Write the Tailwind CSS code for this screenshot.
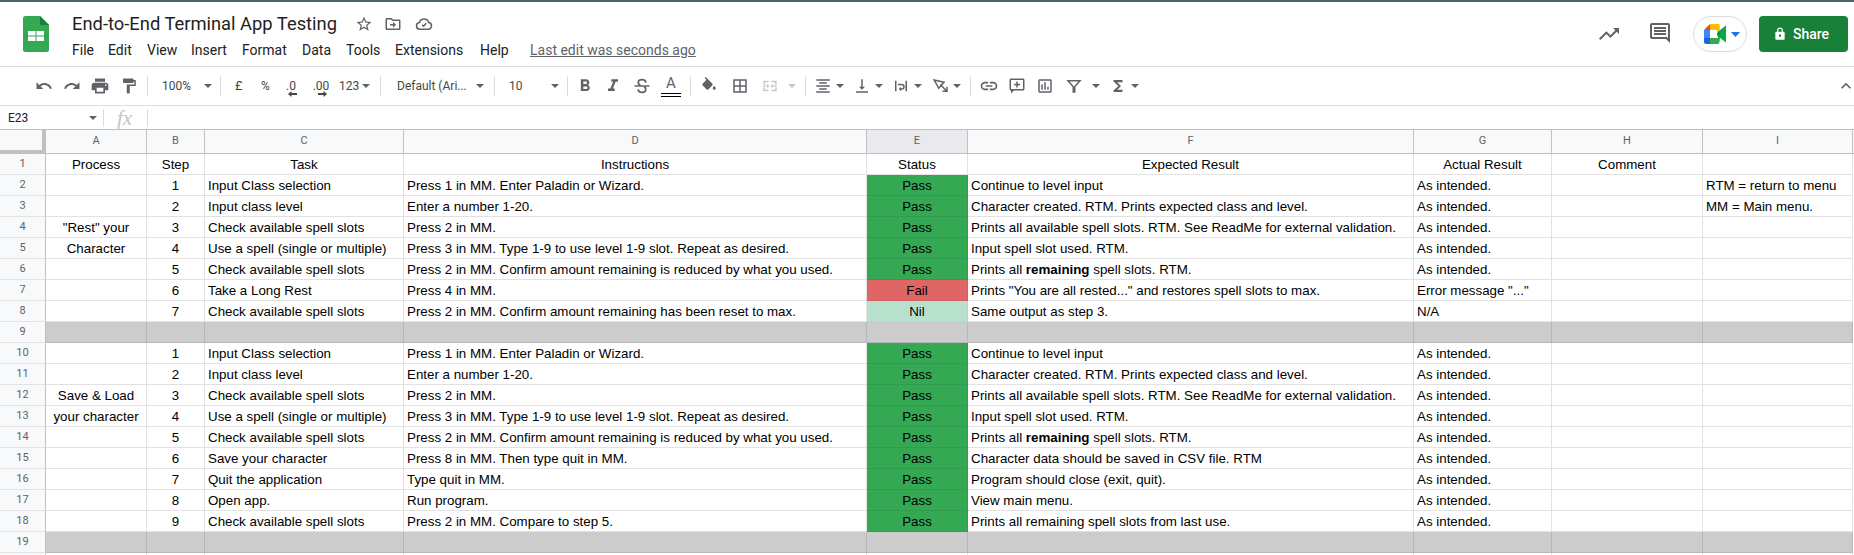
<!DOCTYPE html>
<html lang="en">
<head>
    <meta charset="UTF-8">
    <title>End-to-End Terminal App Testing</title>
    <script src="https://cdn.jsdelivr.net/npm/@tailwindcss/browser@4"></script>
</head>
<body class="bg-white h-[555px] overflow-hidden font-['Liberation_Sans',sans-serif] text-black">
    <div class="h-[2px] bg-[#4a6068]"></div>

    <!-- Title bar -->
    <header class="h-[65px] flex border-b border-[#dadce0] relative">
        <div class="w-[72px] pl-[23px] pt-[14px] shrink-0">
            <svg width="26" height="36" viewBox="0 0 26 36">
                <path d="M2.500 0H17l9 9v24.500a2.500 2.500 0 0 1-2.500 2.500h-21A2.500 2.500 0 0 1 0 33.500v-31A2.500 2.500 0 0 1 2.500 0z" fill="#34a853"/>
                <path d="M17 0l9 9h-9z" fill="#188038"/>
                <path d="M5 15h7.500v4.500H5zM13.500 15H21v4.500h-7.500zM5 20.500h7.500V25H5zM13.500 20.500H21V25h-7.500z" fill="#fff"/>
            </svg>
        </div>
        <div class="flex-1">
            <div class="flex items-center h-[32px] pt-[12px]">
                <span class="font-['Roboto',sans-serif] text-[18.35px] leading-[20px] text-[#1f1f1f]">End-to-End Terminal App Testing</span>
                <svg class="ml-[18px]" width="18" height="18" viewBox="0 0 24 24" fill="#5f6368"><path d="M22 9.240l-7.190-.62L12 2 9.190 8.630 2 9.240l5.460 4.730L5.820 21 12 17.270 18.180 21l-1.630-7.030L22 9.240zM12 15.400l-3.760 2.270 1-4.280-3.320-2.880 4.380-.38L12 6.100l1.710 4.040 4.380.38-3.320 2.880 1 4.280L12 15.400z"/></svg>
                <svg class="ml-[11px]" width="18" height="18" viewBox="0 0 24 24" fill="#5f6368"><path d="M20 6h-8l-2-2H4c-1.100 0-2 .9-2 2v12c0 1.100.9 2 2 2h16c1.100 0 2-.9 2-2V8c0-1.100-.9-2-2-2zm0 12H4V6h5.200l2 2H20v10zm-8-1l4-4-4-4v3H8v2h4v3z"/></svg>
                <svg class="ml-[13px]" width="18" height="18" viewBox="0 0 24 24" fill="none" stroke="#5f6368" stroke-width="2"><path d="M6.500 19a4.500 4.500 0 0 1-.6-8.960A6.500 6.500 0 0 1 18.400 10.100 4.500 4.500 0 0 1 17.500 19z"/><path d="M9.500 13l2 2 3.500-4"/></svg>
            </div>
            <nav class="flex items-center h-[20px] mt-[6px] font-['Roboto',sans-serif] text-[14px] leading-[20px] text-[#202124]">
                <span class="w-[36px]">File</span>
                <span class="w-[39px]">Edit</span>
                <span class="w-[44px]">View</span>
                <span class="w-[51px]">Insert</span>
                <span class="w-[60px]">Format</span>
                <span class="w-[44px]">Data</span>
                <span class="w-[49px]">Tools</span>
                <span class="w-[85px]">Extensions</span>
                <span class="w-[50px]">Help</span>
                <span class="underline text-[#5f6368]">Last edit was seconds ago</span>
            </nav>
        </div>
        <div class="flex items-start pt-[14px] pr-[6px]">
            <svg width="24" height="24" viewBox="0 0 24 24" fill="#5f6368" class="mt-[6px]"><path d="M16 6l2.290 2.290-4.880 4.880-4-4L2 16.590 3.410 18l6-6 4 4 6.300-6.290L22 12V6z"/></svg>
            <svg width="24" height="24" viewBox="0 0 24 24" fill="#5f6368" class="ml-[27px] mt-[5px]"><path d="M21.990 4c0-1.100-.89-2-1.990-2H4c-1.100 0-2 .9-2 2v12c0 1.100.9 2 2 2h14l4 4-.01-18zM20 4v13.170L18.830 16H4V4h16zM6 12h12v2H6zm0-3h12v2H6zm0-3h12v2H6z"/></svg>
            <div class="ml-[21px] w-[54px] h-[36px] border border-[#dadce0] rounded-full flex items-center pl-[10px]">
                <svg width="24" height="20" viewBox="0 0 24 20">
                    <path d="M6 0h9.500v6H6z" fill="#fbbc04"/>
                    <path d="M6 0v6H0z" fill="#ea4335"/>
                    <path d="M0 6h6v8H0z" fill="#4285f4"/>
                    <path d="M0 14h6v6H2a2 2 0 0 1-2-2z" fill="#1967d2"/>
                    <path d="M6 14h9.500v4a2 2 0 0 1-2 2H6z" fill="#34a853"/>
                    <path d="M13 0h.5a2 2 0 0 1 2 2v4.500L13 10z" fill="#fbbc04"/>
                    <path d="M15.500 6.500L22 1.500v17l-6.500-5V17.500L13 10z" fill="#00ac47"/>
                    <path d="M13 10l2.500-3.500v7z" fill="#188038"/>
                </svg>
                <svg class="ml-[3px]" width="9" height="5" viewBox="0 0 9 5" fill="#1a73e8"><path d="M0 0h9L4.500 5z"/></svg>
            </div>
            <div class="ml-[12px] w-[89px] h-[36px] bg-[#188038] rounded-[4px] flex items-center pl-[14px] text-white">
                <svg width="14" height="14" viewBox="0 0 24 24" fill="#fff"><path d="M18 8h-1V6A5 5 0 0 0 7 6v2H6a2 2 0 0 0-2 2v10c0 1.100.9 2 2 2h12a2 2 0 0 0 2-2V10a2 2 0 0 0-2-2zM9 6a3 3 0 0 1 6 0v2H9zm3 11a2 2 0 1 1 0-4 2 2 0 0 1 0 4z"/></svg>
                <span class="ml-[6px] font-['Roboto',sans-serif] font-medium text-[14px]">Share</span>
            </div>
        </div>
    </header>

    <!-- Toolbar -->
    <div class="h-[39px] flex items-center border-b border-[#dadce0] font-['Roboto',sans-serif] text-[12px] text-[#444746] relative">
        <div class="flex items-center pl-[35px]">
            <svg width="18" height="18" viewBox="0 0 24 24" fill="#5f6368"><path d="M12.500 8c-2.650 0-5.050.99-6.900 2.600L2 7v9h9l-3.620-3.620c1.390-1.160 3.160-1.880 5.120-1.880 3.540 0 6.550 2.310 7.600 5.500l2.370-.78C21.080 11.030 17.150 8 12.500 8z"/></svg>
            <svg class="ml-[10px]" width="18" height="18" viewBox="0 0 24 24" fill="#5f6368"><path d="M18.400 10.600C16.550 8.990 14.150 8 11.500 8c-4.650 0-8.580 3.030-9.960 7.220L3.900 16c1.050-3.190 4.050-5.500 7.600-5.500 1.950 0 3.730.72 5.120 1.880L13 16h9V7l-3.600 3.600z"/></svg>
            <svg class="ml-[9px]" width="20" height="20" viewBox="0 0 24 24" fill="#5f6368"><path d="M19 8H5c-1.660 0-3 1.340-3 3v6h4v4h12v-4h4v-6c0-1.660-1.340-3-3-3zm-3 11H8v-5h8v5zm3-7c-.55 0-1-.45-1-1s.45-1 1-1 1 .45 1 1-.45 1-1 1zm-1-9H6v4h12V3z"/></svg>
            <svg class="ml-[10px]" width="18" height="18" viewBox="0 0 24 24" fill="#5f6368"><path d="M18 4V3c0-.55-.45-1-1-1H5c-.55 0-1 .45-1 1v4c0 .55.45 1 1 1h12c.55 0 1-.45 1-1V6h1v4H9v11c0 .55.45 1 1 1h2c.55 0 1-.45 1-1v-9h8V4h-3z"/></svg>
            <div class="ml-[9px] w-px h-[20px] bg-[#dadce0]"></div>
            <span class="ml-[14px] w-[29px]">100%</span>
            <svg class="ml-[13px]" width="8" height="4" viewBox="0 0 8 4" fill="#5f6368"><path d="M0 0h8L4 4z"/></svg>
            <div class="ml-[8px] w-px h-[20px] bg-[#dadce0]"></div>
            <span class="ml-[14px] w-[8px] text-[13px]">£</span>
            <span class="ml-[18px] w-[12px]">%</span>
            <span class="ml-[12px] relative w-[12px] text-center">.0<svg class="absolute left-[3px] top-[14px]" width="9" height="6" viewBox="0 0 9 6" fill="#444746"><path d="M0 3l3.500-3v2H9v2H3.500v2z"/></svg></span>
            <span class="ml-[15px] relative w-[18px] text-center">.00<svg class="absolute left-[6px] top-[14px]" width="9" height="6" viewBox="0 0 9 6" fill="#444746"><path d="M9 3L5.500 0v2H0v2h5.500v2z"/></svg></span>
            <span class="ml-[9px] w-[22px]">123</span>
            <svg class="ml-[1px]" width="8" height="4" viewBox="0 0 8 4" fill="#5f6368"><path d="M0 0h8L4 4z"/></svg>
            <div class="ml-[10px] w-px h-[20px] bg-[#dadce0]"></div>
            <span class="ml-[16px] w-[72px]">Default (Ari...</span>
            <svg class="ml-[7px]" width="8" height="4" viewBox="0 0 8 4" fill="#5f6368"><path d="M0 0h8L4 4z"/></svg>
            <div class="ml-[10px] w-px h-[20px] bg-[#dadce0]"></div>
            <span class="ml-[14px] w-[14px]">10</span>
            <svg class="ml-[28px]" width="8" height="4" viewBox="0 0 8 4" fill="#5f6368"><path d="M0 0h8L4 4z"/></svg>
            <div class="ml-[8px] w-px h-[20px] bg-[#dadce0]"></div>
            <svg class="ml-[7px]" width="20" height="20" viewBox="0 0 24 24" fill="#5f6368"><path d="M15.600 10.790c.97-.67 1.650-1.770 1.650-2.790 0-2.260-1.750-4-4-4H7v14h7.040c2.090 0 3.710-1.700 3.710-3.790 0-1.520-.86-2.820-2.150-3.420zM10 6.500h3c.83 0 1.500.67 1.500 1.500s-.67 1.500-1.500 1.500h-3v-3zm3.500 9H10v-3h3.500c.83 0 1.500.67 1.500 1.500s-.67 1.500-1.500 1.500z"/></svg>
            <svg class="ml-[8px]" width="20" height="20" viewBox="0 0 24 24" fill="#5f6368"><path d="M10 4v3h2.210l-3.420 8H6v3h8v-3h-2.210l3.420-8H18V4z"/></svg>
            <svg class="ml-[9px]" width="20" height="20" viewBox="0 0 24 24" fill="none" stroke="#5f6368" stroke-width="2.200"><path d="M16.500 8c0-2.300-2-3.700-4.500-3.700S7.500 5.700 7.500 8c0 1.700 1.200 2.700 2.700 3.300M7.500 16c0 2.300 2 3.700 4.500 3.700s4.500-1.400 4.500-3.700c0-1.500-.8-2.500-2-3.200"/><path d="M3 12h18" stroke-width="1.800"/></svg>
            <div class="ml-[9px] w-[20px] h-[24px] flex flex-col items-center">
                <span class="text-[15px] leading-[18px] text-[#5f6368]">A</span>
                <div class="w-[20px] h-[4px] border-y border-black mt-px"></div>
            </div>
            <div class="ml-[9px] w-px h-[20px] bg-[#dadce0]"></div>
            <svg class="ml-[9px]" width="18" height="18" viewBox="0 0 24 24" fill="#5f6368"><path d="M16.560 8.940L7.620 0 6.210 1.410l2.380 2.380-5.150 5.150a1.490 1.490 0 0 0 0 2.120l5.500 5.500c.29.29.68.44 1.060.44s.77-.15 1.060-.44l5.500-5.500c.59-.58.59-1.530 0-2.120zM19 11.500s-2 2.170-2 3.500c0 1.100.9 2 2 2s2-.9 2-2c0-1.330-2-3.500-2-3.500z"/></svg>
            <svg class="ml-[13px]" width="18" height="18" viewBox="0 0 24 24" fill="#5f6368"><path d="M3 3v18h18V3H3zm8 16H5v-6h6v6zm0-8H5V5h6v6zm8 8h-6v-6h6v6zm0-8h-6V5h6v6z"/></svg>
            <svg class="ml-[12px]" width="18" height="18" viewBox="0 0 24 24" fill="#c4c7c5"><path d="M3 5h7v2H5v3H3zm11 0h7v5h-2V7h-5zM3 14h2v3h5v2H3zm16 0h2v5h-7v-2h5zM3 11h4v2H3zm14 0h4v2h-4zM8 9l3 3-3 3zm8 0v6l-3-3z"/></svg>
            <svg class="ml-[9px]" width="8" height="4" viewBox="0 0 8 4" fill="#c4c7c5"><path d="M0 0h8L4 4z"/></svg>
            <div class="ml-[9px] w-px h-[20px] bg-[#dadce0]"></div>
            <svg class="ml-[8px]" width="18" height="18" viewBox="0 0 24 24" fill="#5f6368"><path d="M3 21h18v-2H3zm4-4h10v-2H7zm-4-4h18v-2H3zm4-4h10V7H7zM3 3v2h18V3z"/></svg>
            <svg class="ml-[4px]" width="8" height="4" viewBox="0 0 8 4" fill="#5f6368"><path d="M0 0h8L4 4z"/></svg>
            <svg class="ml-[9px]" width="18" height="18" viewBox="0 0 24 24" fill="#5f6368"><path d="M16 13h-3V3h-2v10H8l4 4 4-4zM4 19v2h16v-2H4z"/></svg>
            <svg class="ml-[4px]" width="8" height="4" viewBox="0 0 8 4" fill="#5f6368"><path d="M0 0h8L4 4z"/></svg>
            <svg class="ml-[9px]" width="18" height="18" viewBox="0 0 24 24" fill="#5f6368"><path d="M4 19h2V5H4zm14-14v14h2V5zM8 11h5a2 2 0 0 1 0 4h-1v-2l-3 3 3 3v-2h1a4 4 0 0 0 0-8H8z"/></svg>
            <svg class="ml-[4px]" width="8" height="4" viewBox="0 0 8 4" fill="#5f6368"><path d="M0 0h8L4 4z"/></svg>
            <svg class="ml-[10px]" width="18" height="18" viewBox="0 0 24 24" fill="none" stroke="#5f6368" stroke-width="2"><path d="M3 4l13 3-7 8z"/><path d="M11 10l9 9M20 13v6h-6"/></svg>
            <svg class="ml-[3px]" width="8" height="4" viewBox="0 0 8 4" fill="#5f6368"><path d="M0 0h8L4 4z"/></svg>
            <div class="ml-[9px] w-px h-[20px] bg-[#dadce0]"></div>
            <svg class="ml-[8px]" width="20" height="20" viewBox="0 0 24 24" fill="#5f6368"><path d="M3.900 12c0-1.710 1.390-3.100 3.100-3.100h4V7H7c-2.760 0-5 2.240-5 5s2.240 5 5 5h4v-1.900H7c-1.710 0-3.100-1.390-3.100-3.100zM8 13h8v-2H8v2zm9-6h-4v1.900h4c1.710 0 3.100 1.390 3.100 3.100s-1.390 3.100-3.100 3.100h-4V17h4c2.760 0 5-2.240 5-5s-2.240-5-5-5z"/></svg>
            <svg class="ml-[9px]" width="18" height="18" viewBox="0 0 24 24" fill="#5f6368"><path d="M22 4c0-1.100-.9-2-2-2H4c-1.100 0-2 .9-2 2v12c0 1.100.9 2 2 2h0v4l4-4h12c1.100 0 2-.9 2-2zm-2 12H4V4h16zM11 6h2v3h3v2h-3v3h-2v-3H8V9h3z"/></svg>
            <svg class="ml-[10px]" width="18" height="18" viewBox="0 0 24 24" fill="#5f6368"><path d="M19 3H5c-1.100 0-2 .9-2 2v14c0 1.100.9 2 2 2h14c1.100 0 2-.9 2-2V5c0-1.100-.9-2-2-2zm0 16H5V5h14v14zM7 10h2v7H7zm4-3h2v10h-2zm4 6h2v4h-2z"/></svg>
            <svg class="ml-[11px]" width="18" height="18" viewBox="0 0 24 24" fill="none" stroke="#5f6368" stroke-width="2"><path d="M4 5h16l-7 8v7h-2v-7z"/></svg>
            <svg class="ml-[9px]" width="8" height="4" viewBox="0 0 8 4" fill="#5f6368"><path d="M0 0h8L4 4z"/></svg>
            <svg class="ml-[9px]" width="18" height="18" viewBox="0 0 24 24" fill="#5f6368"><path d="M18 4H6v2l6.500 6L6 18v2h12v-3h-7l5-5-5-5h7z"/></svg>
            <svg class="ml-[4px]" width="8" height="4" viewBox="0 0 8 4" fill="#5f6368"><path d="M0 0h8L4 4z"/></svg>
        </div>
        <svg class="absolute right-[-2px] top-[9px]" width="20" height="20" viewBox="0 0 24 24" fill="#5f6368"><path d="M12 8l-6 6 1.410 1.410L12 10.830l4.590 4.580L18 14z"/></svg>
    </div>

    <!-- Formula bar -->
    <div class="h-[24px] flex items-center border-b border-[#c0c0c0]">
        <span class="ml-[8px] w-[80px] text-[12px] font-['Roboto',sans-serif] text-[#202124]">E23</span>
        <svg width="8" height="4" viewBox="0 0 8 4" fill="#5f6368" class="ml-[1px]"><path d="M0 0h8L4 4z"/></svg>
        <div class="ml-[6px] w-px h-[18px] bg-[#dadce0]"></div>
        <span class="ml-[13px] w-[30px] font-['Liberation_Serif',serif] italic text-[21px] leading-[20px] text-[#c4c7c5]">fx</span>
        <div class="w-px h-[18px] bg-[#dadce0]"></div>
    </div>

    <!-- Sheet -->
    <div id="sheet" class="grid grid-cols-[46px_101px_58px_199px_463px_101px_446px_138px_151px_150px_1fr] grid-rows-[24px_repeat(20,21px)] text-[13.33px]"></div>

    <script>
        const headers = ['A', 'B', 'C', 'D', 'E', 'F', 'G', 'H', 'I'];
        const tasksRest = [
            ['Input Class selection', 'Press 1 in MM. Enter Paladin or Wizard.', 'Continue to level input'],
            ['Input class level', 'Enter a number 1-20.', 'Character created. RTM. Prints expected class and level.'],
            ['Check available spell slots', 'Press 2 in MM.', 'Prints all available spell slots. RTM. See ReadMe for external validation.'],
            ['Use a spell (single or multiple)', 'Press 3 in MM. Type 1-9 to use level 1-9 slot. Repeat as desired.', 'Input spell slot used. RTM.'],
            ['Check available spell slots', 'Press 2 in MM. Confirm amount remaining is reduced by what you used.', 'Prints all <b>remaining</b> spell slots. RTM.']
        ];
        const rows = [
            { cells: ['Process', 'Step', 'Task', 'Instructions', 'Status', 'Expected Result', 'Actual Result', 'Comment', ''], head: true },
            ...tasksRest.map((t, i) => ({ num: i + 1, t, status: 'Pass', actual: 'As intended.' })),
            { num: 6, t: ['Take a Long Rest', 'Press 4 in MM.', 'Prints "You are all rested..." and restores spell slots to max.'], status: 'Fail', actual: 'Error message "..."' },
            { num: 7, t: ['Check available spell slots', 'Press 2 in MM. Confirm amount remaining has been reset to max.', 'Same output as step 3.'], status: 'Nil', actual: 'N/A' },
            { grey: true },
            ...tasksRest.map((t, i) => ({ num: i + 1, t, status: 'Pass', actual: 'As intended.' })),
            { num: 6, t: ['Save your character', 'Press 8 in MM. Then type quit in MM.', 'Character data should be saved in CSV file. RTM'], status: 'Pass', actual: 'As intended.' },
            { num: 7, t: ['Quit the application', 'Type quit in MM.', 'Program should close (exit, quit).'], status: 'Pass', actual: 'As intended.' },
            { num: 8, t: ['Open app.', 'Run program.', 'View main menu.'], status: 'Pass', actual: 'As intended.' },
            { num: 9, t: ['Check available spell slots', 'Press 2 in MM. Compare to step 5.', 'Prints all remaining spell slots from last use.'], status: 'Pass', actual: 'As intended.' },
            { grey: true },
            { cells: ['', '', '', '', '', '', '', '', ''] }
        ];
        const processLabels = { 4: '"Rest" your', 5: 'Character', 12: 'Save &amp; Load', 13: 'your character' };
        const notes = { 2: 'RTM = return to menu', 3: 'MM = Main menu.' };
        const statusClass = {
            Pass: 'bg-[#34a853] border-r border-b border-[#2f9d4d]',
            Fail: 'bg-[#e06666] border-r border-b border-[#d65f5f]',
            Nil: 'bg-[#b7e1cd] border-r border-b border-[#afd9c5]'
        };

        const hdrCell = 'flex items-center justify-center border-r border-b border-[#c0c0c0] text-[11px] font-[\'Roboto\',sans-serif] text-[#5f6368]';
        const rowNum = 'flex items-center justify-center bg-[#f8f9fa] border-r border-b border-r-[#c0c0c0] border-b-[#e2e2e2] text-[11px] font-[\'Roboto\',sans-serif] text-[#5f6368]';
        const left = 'flex items-center pt-[2px] px-[3px] whitespace-nowrap overflow-hidden border-r border-b border-[#e2e2e2]';
        const center = 'flex items-center justify-center pt-[2px] whitespace-nowrap overflow-hidden border-r border-b border-[#e2e2e2]';
        const statusCell = 'flex items-center justify-center pt-[2px] whitespace-nowrap overflow-hidden';
        const grey = 'bg-[#cccccc] border-r border-b border-[#b7b7b7]';

        let html = '<div class="bg-[#f8f9fa] border-r-[4px] border-b-[4px] border-[#c0c0c0]"></div>';
        headers.forEach(h => {
            const bg = h === 'E' ? 'bg-[#e8eaed]' : 'bg-[#f8f9fa]';
            html += `<div class="${hdrCell} ${bg}">${h}</div>`;
        });
        html += '<div class="bg-[#f8f9fa] border-b border-[#c0c0c0]"></div>';

        rows.forEach((row, i) => {
            const n = i + 1;
            html += `<div class="${rowNum}">${n < 20 ? n : ''}</div>`;
            if (row.grey) {
                for (let c = 0; c < 9; c++) html += `<div class="${grey}"></div>`;
            } else if (row.head) {
                html += row.cells.map(c => `<div class="${center}"><span>${c}</span></div>`).join('');
            } else if (row.cells) {
                html += row.cells.map(() => `<div class="${center}"></div>`).join('');
            } else {
                html += `<div class="${center}"><span>${processLabels[n] || ''}</span></div>`;
                html += `<div class="${center}"><span>${row.num}</span></div>`;
                html += `<div class="${left}"><span>${row.t[0]}</span></div>`;
                html += `<div class="${left}"><span>${row.t[1]}</span></div>`;
                html += `<div class="${statusCell} ${statusClass[row.status]}"><span>${row.status}</span></div>`;
                html += `<div class="${left}"><span>${row.t[2]}</span></div>`;
                html += `<div class="${left}"><span>${row.actual}</span></div>`;
                html += `<div class="${left}"></div>`;
                html += `<div class="${left}"><span>${notes[n] || ''}</span></div>`;
            }
            html += '<div></div>';
        });
        document.getElementById('sheet').innerHTML = html;
    </script>
</body>
</html>
